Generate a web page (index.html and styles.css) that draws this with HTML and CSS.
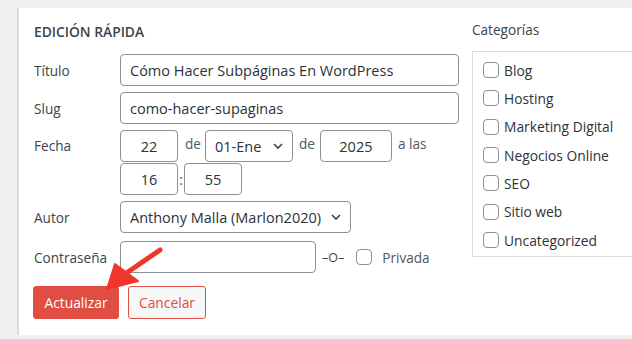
FILE: index.html
```html
<!DOCTYPE html>
<html lang="es">
<head>
<meta charset="utf-8">
<link rel="stylesheet" href="styles.css">
</head>
<body>
<div class="page">
  <div class="panel">
    <div class="left">
      <h2 class="heading">EDICIÓN RÁPIDA</h2>
      <div class="row r-title">
        <span class="label">Título</span>
        <input class="field w-title" type="text" value="Cómo Hacer Subpáginas En WordPress">
      </div>
      <div class="row r-slug">
        <span class="label">Slug</span>
        <input class="field w-title" type="text" value="como-hacer-supaginas">
      </div>
      <div class="row r-date">
        <span class="label">Fecha</span>
        <div class="datebox">
          <div class="dateline">
            <input class="field num w-day" type="text" value="22">
            <span class="sep de1">de</span>
            <div class="field sel w-month"><span>01-Ene</span><svg class="chev" width="10" height="6" viewBox="0 0 10 6"><path d="M1 1l4 4 4-4" fill="none" stroke="#3c434a" stroke-width="1.6"/></svg></div>
            <span class="sep de2">de</span>
            <input class="field num w-year" type="text" value="2025">
            <span class="sep alas">a las</span>
          </div>
          <div class="dateline line2">
            <input class="field num w-day" type="text" value="16">
            <span class="colon">:</span>
            <input class="field num w-day" type="text" value="55">
          </div>
        </div>
      </div>
      <div class="row r-author">
        <span class="label">Autor</span>
        <div class="field sel w-author"><span>Anthony Malla (Marlon2020)</span><svg class="chev" width="10" height="6" viewBox="0 0 10 6"><path d="M1 1l4 4 4-4" fill="none" stroke="#3c434a" stroke-width="1.6"/></svg></div>
      </div>
      <div class="row r-pass">
        <span class="label">Contraseña</span>
        <input class="field w-pass" type="text" value="">
        <span class="or">–O–</span>
        <span class="cb cb-priv"></span>
        <span class="priv">Privada</span>
      </div>
      <div class="buttons">
        <button class="btn primary">Actualizar</button>
        <button class="btn secondary">Cancelar</button>
      </div>
    </div>
    <div class="right">
      <div class="cat-title">Categorías</div>
      <ul class="cats">
        <li><span class="cb"></span>Blog</li>
        <li><span class="cb"></span>Hosting</li>
        <li><span class="cb"></span>Marketing Digital</li>
        <li><span class="cb"></span>Negocios Online</li>
        <li><span class="cb"></span>SEO</li>
        <li><span class="cb"></span>Sitio web</li>
        <li><span class="cb"></span>Uncategorized</li>
      </ul>
    </div>
    <svg class="arrow" width="80" height="60" viewBox="0 0 80 60">
      <path d="M69 10 L34 34" stroke="#f2352b" stroke-width="5" stroke-linecap="round" fill="none"/>
      <path d="M16 49 L24 24 L47 41 Z" fill="#f2352b" stroke="#f2352b" stroke-width="2" stroke-linejoin="round"/>
    </svg>
  </div>
</div>
</body>
</html>
```
FILE: styles.css
```css
* { box-sizing: border-box; }
html, body { margin: 0; padding: 0; }
body {
  background: #f0f0f1;
  font-family: "Open Sans", "Noto Sans", sans-serif;
  font-size: 13.6px;
  color: #3c434a;
  width: 632px;
  height: 339px;
  overflow: hidden;
}
.page {
  padding: 8px 0 0 17px;
  height: 335px;
}
.panel {
  position: relative;
  background: #fff;
  border-left: 2px solid #dcdcde;
  height: 327px;
  display: flex;
  overflow: hidden;
}
.left {
  width: 453px;
  flex: none;
  padding-left: 15px;
  display: flex;
  flex-direction: column;
}
.heading {
  margin: 16px 0 0;
  font-size: 13.8px;
  font-weight: 600;
  color: #3c434a;
  line-height: 16px;
  letter-spacing: 0;
}
.row {
  display: flex;
  align-items: center;
}
.label {
  width: 86px;
  flex: none;
  color: #3c434a;
}
.r-title { margin-top: 14px; }
.r-slug { margin-top: 6px; }
.r-date { margin-top: 6px; align-items: flex-start; }
.r-date .label { line-height: 32px; }
.r-author { margin-top: 6px; }
.r-pass { margin-top: 8px; }
.field {
  height: 32px;
  border: 1px solid #8c8f94;
  border-radius: 4px;
  background: #fff;
  font: inherit;
  font-size: 14.5px;
  color: #2c3338;
  padding: 0 9px;
  margin: 0;
  outline: none;
}
.w-title { width: 339px; }
.w-day { width: 58px; }
.w-year { width: 72px; }
.w-pass { width: 196px; }
.num { text-align: center; }
.sel {
  display: flex;
  align-items: center;
  justify-content: space-between;
  padding: 0 9px 0 9px;
}
.w-month { width: 88px; }
.w-author { width: 231px; }
.chev { flex: none; }
.datebox { display: flex; flex-direction: column; gap: 1px; }
.dateline { display: flex; align-items: center; }
.sep { color: #50575e; }
.de1 { margin: 0 4px 0 7px; position: relative; top: -3px; }
.de2 { margin: 0 5px 0 6px; position: relative; top: -3px; }
.alas { margin-left: 6px; position: relative; top: -3px; }
.colon { width: 6px; text-align: center; color: #50575e; }
.or { margin-left: 6px; color: #3c434a; font-size: 12.5px; }
.cb {
  display: inline-block;
  width: 16px;
  height: 16px;
  border: 1px solid #8c8f94;
  border-radius: 4px;
  background: #fff;
  flex: none;
}
.cb-priv { margin-left: 12px; }
.priv { margin-left: 10px; color: #50575e; }
.buttons {
  display: flex;
  gap: 9px;
  margin-top: 13px;
  margin-left: -1px;
}
.btn {
  height: 33px;
  border-radius: 3px;
  font: inherit;
  font-size: 13.8px;
  padding: 0 8px;
  cursor: pointer;
}
.primary {
  width: 86px;
  background: #e14d43;
  border: 1px solid #e14d43;
  color: #fff;
}
.secondary {
  width: 78px;
  background: #f6f7f7;
  border: 1px solid #e14d43;
  color: #e14d43;
}
.right {
  width: 200px;
  flex: none;
}
.cat-title {
  margin-top: 13px;
  line-height: 18px;
  color: #3c434a;
}
.cats {
  list-style: none;
  margin: 12px 0 0;
  padding: 4px 10px 2px;
  border: 1px solid #dcdcde;
  width: 200px;
  height: 206px;
}
.cats li {
  height: 28.33px;
  display: flex;
  align-items: center;
  gap: 5px;
  color: #2c3338;
  font-size: 13.8px;
}
.arrow {
  position: absolute;
  left: 72px;
  top: 232px;
}
```
